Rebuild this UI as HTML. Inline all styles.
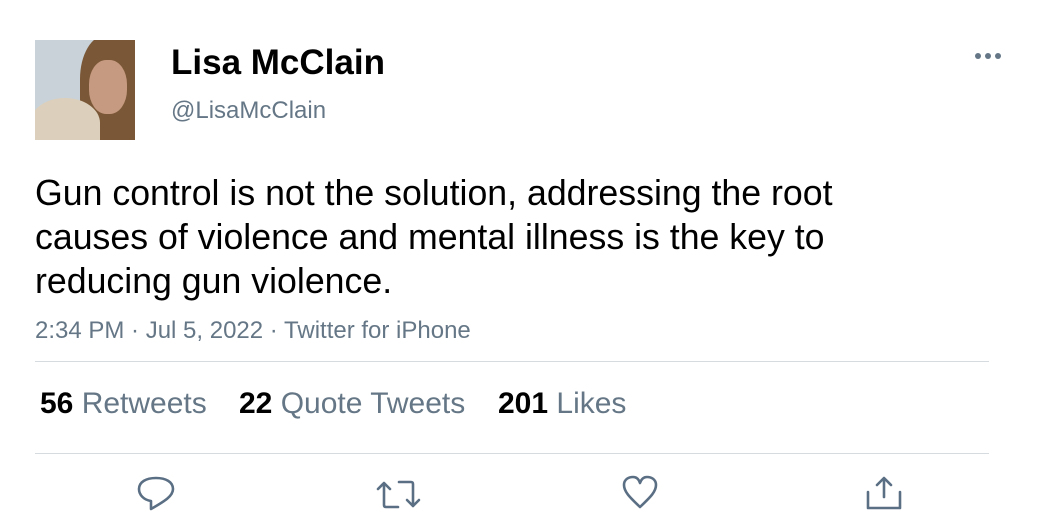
<!DOCTYPE html>
<html><head><meta charset="utf-8"><style>
body{margin:0;width:1050px;height:525px;background:#fff;font-family:"Liberation Sans",Arial,sans-serif;position:relative;overflow:hidden}
.a{position:absolute;white-space:nowrap}
</style></head><body>
<div class="a" style="left:35px;top:40px;width:100px;height:100px;overflow:hidden;background:#c8d2d8">
<div class="a" style="left:45px;top:-5px;width:65px;height:110px;border-radius:40% 0 0 0;background:#7a5736"></div>
<div class="a" style="left:54px;top:20px;width:38px;height:54px;border-radius:45%;background:#c69a80"></div>
<div class="a" style="left:-5px;top:58px;width:70px;height:50px;border-radius:50% 50% 0 0;background:#dcd0bc"></div>
</div>
<div class="a" style="left:171px;top:43px;font-size:35px;font-weight:bold;color:#000">Lisa McClain</div>
<div class="a" style="left:171px;top:97px;font-size:24px;color:#657786">@LisaMcClain</div>
<svg class="a" style="left:974px;top:50px" width="30" height="12"><circle cx="4" cy="6" r="3" fill="#657786"/><circle cx="14" cy="6" r="3" fill="#657786"/><circle cx="24" cy="6" r="3" fill="#657786"/></svg>
<div class="a" style="left:35px;top:171px;font-size:35.7px;line-height:44px;color:#000;width:900px">Gun control is not the solution, addressing the root<br>causes of violence and mental illness is the key to<br>reducing gun violence.</div>
<div class="a" style="left:35px;top:317px;font-size:24px;color:#657786">2:34 PM · Jul 5, 2022 · Twitter for iPhone</div>
<div class="a" style="left:35px;top:361px;width:954px;height:1px;background:#d6dbdf"></div>
<div class="a" style="left:40px;top:387px;font-size:30px;color:#657786"><b style="color:#000">56</b> Retweets</div>
<div class="a" style="left:239px;top:387px;font-size:30px;color:#657786"><b style="color:#000">22</b> Quote Tweets</div>
<div class="a" style="left:498px;top:387px;font-size:30px;color:#657786"><b style="color:#000">201</b> Likes</div>
<div class="a" style="left:35px;top:453px;width:954px;height:1px;background:#d6dbdf"></div>
<svg class="a" style="left:0;top:0" width="1050" height="525" fill="none" stroke="#5b6f84" stroke-width="2.6" stroke-linecap="round" stroke-linejoin="round">
<path d="M151 509 L151 501 C144 500 139 495 139 489 C139 482 146 478 156 478 C166 478 173 482 173 489 C173 496 165 501 151 509 Z"/>
<path d="M384 483 L384 505 Q384 507 386 507 L398 507 M378 489 L384 483 L390 489"/>
<path d="M413 506 L413 484 Q413 482 411 482 L399 482 M407 500 L413 506 L419 500"/>
<path d="M640 507 C633 500 624 493 624 485 C624 479 629 477 633 477 C637 477 639 480 640 483 C641 480 643 477 647 477 C651 477 656 479 656 485 C656 493 647 500 640 507 Z"/>
<path d="M884 478 L884 497 M877 485 L884 478 L891 485 M868 492 L868 508 L900 508 L900 492"/>
</svg>
</body></html>
